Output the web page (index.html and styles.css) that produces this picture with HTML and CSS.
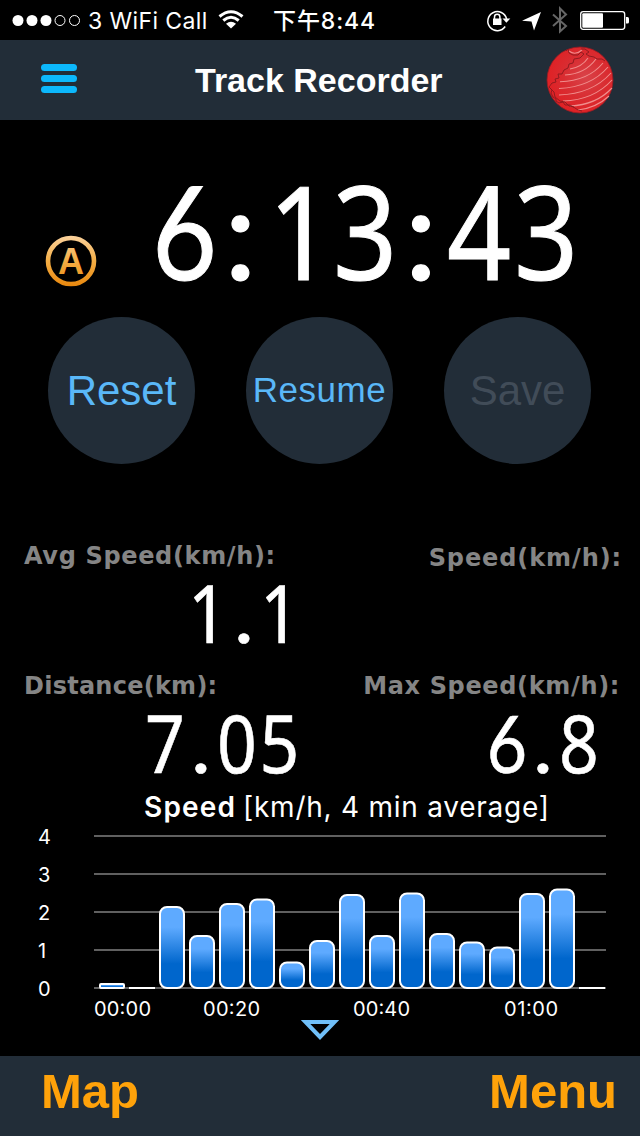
FILE: index.html
```html
<!DOCTYPE html>
<html lang="en">
<head>
	<meta charset="UTF-8">
	<title>Track Recorder</title>
	<link rel="stylesheet" href="styles.css">
</head>
<body>
	<div class="status">
		<svg class="signal" width="68" height="14" viewBox="0 0 68 14">
			<circle cx="6" cy="7.500" r="5.500" fill="#fff"/>
			<circle cx="20" cy="7.500" r="5.500" fill="#fff"/>
			<circle cx="34" cy="7.500" r="5.500" fill="#fff"/>
			<circle cx="48" cy="7.500" r="5" fill="none" stroke="#fff"/>
			<circle cx="62.500" cy="7.500" r="5" fill="none" stroke="#fff"/>
		</svg>
		<span class="carrier">3 WiFi Call</span>
		<svg class="wifi" width="26" height="20" viewBox="0 0 26 20">
			<path d="M1.500 6.500Q13 -3 24.500 6.500" fill="none" stroke="#fff" stroke-width="3"/>
			<path d="M5.300 10.500Q13 4 20.700 10.500" fill="none" stroke="#fff" stroke-width="3"/>
			<path d="M13 18.500L8 13.700Q13 9.800 18 13.700Z" fill="#fff"/>
		</svg>
		<span class="clock">下午8:44</span>
		<svg class="icons" width="146" height="28" viewBox="484 6 146 28">
			<path d="M505.200 26.500A9.500 9.500 0 1 1 506.600 19" fill="none" stroke="#fff" stroke-width="1.500"/>
			<path d="M502.500 18.500H510.300L506.400 22.800Z" fill="#fff"/>
			<rect x="493" y="18.500" width="8.500" height="6.500" fill="#fff"/>
			<path d="M494.500 19V17a2.700 2.700 0 0 1 5.400 0V19" fill="none" stroke="#fff" stroke-width="1.500"/>
			<path d="M541 12L534 30.500L531.500 21.600L522 20.800Z" fill="#fff"/>
			<path d="M553 14.500L566 26L560 31.500V8.500L566 14.500L553 26" fill="none" stroke="#666" stroke-width="2"/>
			<rect x="580.700" y="11.700" width="44" height="17.600" rx="2.500" fill="none" stroke="#fff" stroke-width="1.300"/>
			<rect x="582.300" y="13.300" width="20.700" height="14.400" rx="1" fill="#fff"/>
			<path d="M626 17h1.500q1.500 0 1.500 1.500v3.500q0 1.500 -1.500 1.500h-1.500Z" fill="#fff"/>
		</svg>
	</div>

	<div class="header">
		<div class="bars"><i></i><i></i><i></i></div>
		<h1>Track Recorder</h1>
		<svg class="globe" width="68" height="68" viewBox="0 0 68 68">
			<defs>
				<radialGradient id="red" cx="58%" cy="45%" r="55%">
					<stop offset="0" stop-color="#d94349"/>
					<stop offset="0.600" stop-color="#d92c31"/>
					<stop offset="1" stop-color="#df2226"/>
				</radialGradient>
			</defs>
			<circle cx="34" cy="34" r="33" fill="url(#red)" stroke="#9c1b22" stroke-width="0.800"/>
			<g fill="none" stroke="#f08d8c" stroke-width="1.100">
				<path d="M23 5q6 5 13 -1"/>
				<path d="M24 23Q36 21 42 12"/>
				<path d="M19 29Q39 28 50 13"/>
				<path d="M14 35.700Q42 35 57 17"/>
				<path d="M13 42.500Q45 41 62 21"/>
				<path d="M13 49Q46 48 65 27"/>
				<path d="M17 55Q48 54 66 34"/>
				<path d="M24 60Q50 59 66 42"/>
				<path d="M32 64Q50 62 63 50"/>
			</g>
			<g fill="none" stroke="#8a1a1e" stroke-width="0.900" stroke-linejoin="round">
				<path d="M28 13l-1 4 -4 1 -1 4 -4 2 -2 4 -4 0 1 4 -4 1 1 3 -4 1 -3 4 3 3 -1 3 2 4 3 2 0 2 3 2 4 -1 2 3 5 0 5 3 3 2 4 1"/>
				<path d="M20 5l2 -2 1 4 4 2 5 0 3 -3 3 2 -4 4 -6 1"/>
				<path d="M35 3l4 0 4 3 -3 2 3 2 5 1 3 2 5 0 3 2"/>
				<path d="M4 42l4 4 1 5 5 4 5 1 4 4 5 1"/>
			</g>
		</svg>
	</div>

	<div class="timer_row">
		<svg class="auto" width="52" height="52" viewBox="0 0 52 52">
			<defs>
				<linearGradient id="gold" gradientUnits="userSpaceOnUse" x1="0" y1="0" x2="0" y2="52">
					<stop offset="0" stop-color="#fbd3a0"/>
					<stop offset="0.500" stop-color="#f4ae45"/>
					<stop offset="1" stop-color="#e8870c"/>
				</linearGradient>
			</defs>
			<circle cx="26" cy="26" r="23" fill="none" stroke="url(#gold)" stroke-width="4.600"/>
			<text x="26" y="38.500" class="auto_text" fill="url(#gold)">A</text>
		</svg>
		<div class="digits timer">
			<b class="w61 six">6</b><b class="w51 dot">:</b><b class="w69">1</b><b class="w60">3</b><b class="w52 dot">:</b><b class="w64">4</b><b class="w70">3</b>
		</div>
	</div>

	<div class="buttons">
		<div class="btn">Reset</div>
		<div class="btn resume">Resume</div>
		<div class="btn disabled">Save</div>
	</div>

	<div class="stats">
		<div class="stat">
			<div class="label avg">Avg Speed(km/h):</div>
			<div class="digits value v11"><b>1</b><b class="dot">.</b><b>1</b></div>
		</div>
		<div class="stat right">
			<div class="label speed">Speed(km/h):</div>
		</div>
		<div class="stat">
			<div class="label distance">Distance(km):</div>
			<div class="digits value v705"><b>7</b><b class="dot">.</b><b>0</b><b>5</b></div>
		</div>
		<div class="stat right">
			<div class="label max">Max Speed(km/h):</div>
			<div class="digits value v68"><b class="six">6</b><b class="dot">.</b><b>8</b></div>
		</div>
	</div>

	<svg class="chart" width="640" height="268" viewBox="0 788 640 268">
		<defs>
			<linearGradient id="blue" x1="0" y1="0" x2="0" y2="1">
				<stop offset="0.250" stop-color="#5eaaff"/>
				<stop offset="0.700" stop-color="#0066cc"/>
			</linearGradient>
		</defs>
		<text x="144" y="817" class="title strong" textLength="91">Speed</text>
		<text x="243" y="817" class="title" textLength="306">[km/h, 4 min average]</text>
		<path d="M94 836H606M94 874H606M94 912H606M94 950H606M94 988H606" stroke="#606060" stroke-width="2"/>
		<g class="axis">
			<text x="38" y="844">4</text>
			<text x="38" y="882">3</text>
			<text x="38" y="920">2</text>
			<text x="38" y="958">1</text>
			<text x="38" y="996">0</text>
			<text x="94" y="1016" textLength="57">00:00</text>
			<text x="203" y="1016" textLength="57">00:20</text>
			<text x="353" y="1016" textLength="57">00:40</text>
			<text x="504" y="1016" textLength="54">01:00</text>
		</g>
		<g class="columns">
			<rect x="100" y="984" width="24" height="4" rx="1"/>
			<rect x="160" y="907" width="24" height="81" rx="7"/>
			<rect x="190" y="936" width="24" height="52" rx="7"/>
			<rect x="220" y="904" width="24" height="84" rx="7"/>
			<rect x="250" y="899.500" width="24" height="88.500" rx="7"/>
			<rect x="280" y="962.500" width="24" height="25.500" rx="7"/>
			<rect x="310" y="941" width="24" height="47" rx="7"/>
			<rect x="340" y="895" width="24" height="93" rx="7"/>
			<rect x="370" y="936" width="24" height="52" rx="7"/>
			<rect x="400" y="893.500" width="24" height="94.500" rx="7"/>
			<rect x="430" y="934" width="24" height="54" rx="7"/>
			<rect x="460" y="942.500" width="24" height="45.500" rx="7"/>
			<rect x="490" y="947.500" width="24" height="40.500" rx="7"/>
			<rect x="520" y="894" width="24" height="94" rx="7"/>
			<rect x="550" y="889.500" width="24" height="98.500" rx="7"/>
		</g>
		<path d="M129 988H155M579 988H605" stroke="#fff" stroke-width="2"/>
		<path d="M305.500 1022H334.500L320 1037Z" fill="none" stroke="#70bff8" stroke-width="4"/>
	</svg>

	<div class="footer">
		<span>Map</span>
		<span>Menu</span>
	</div>
</body>
</html>
```

FILE: styles.css
```css
*{
	margin:0;
	padding:0;
	box-sizing:border-box;
}

body{
	width:640px;
	height:1136px;
	background-color:#000;
	color:#fff;
	font-family:"Liberation Sans",Arial,sans-serif;
	overflow:hidden;
}

svg{
	display:block;
	flex:none;
}

.status{
	display:flex;
	align-items:center;
	height:40px;
	padding-left:12px;
	font-family:Inter,"Noto Sans CJK SC",sans-serif;
	font-size:23px;
	line-height:40px;
	white-space:nowrap;
}

.carrier{
	width:130px;
	padding:1px 0 0 8px;
	letter-spacing:0.4px;
}

.wifi{
	margin-left:8px;
}

.clock{
	width:240px;
	padding:1px 0 0 29px;
	font-weight:500;
	letter-spacing:0.9px;
}

.header{
	display:flex;
	align-items:center;
	height:80px;
	padding-left:41px;
	background-color:#222d38;
}

.bars{
	display:flex;
	flex-direction:column;
	gap:4px;
	width:36px;
	margin-top:-3px;
}

.bars i{
	height:7px;
	border-radius:4px;
	background-color:#0cb8fc;
}

.header h1{
	width:469px;
	padding-left:118px;
	font-size:34px;
	line-height:80px;
	white-space:nowrap;
}

.timer_row{
	display:flex;
	height:197px;
	padding-left:45px;
}

.auto{
	margin-top:115px;
}

.auto_text{
	font-family:"Liberation Sans",Arial,sans-serif;
	font-size:36px;
	font-weight:bold;
	text-anchor:middle;
}

.digits{
	display:flex;
	font-family:"Noto Sans",sans-serif;
	white-space:nowrap;
}

.digits b{
	display:flex;
	flex:none;
	justify-content:center;
	font-weight:normal;
	transform:scaleX(0.87);
}

.digits .six,
.digits .dot{
	font-family:Lato,sans-serif;
}

.digits .dot{
	transform:scaleX(1.05);
}

.timer{
	margin:48px 0 0 57px;
	height:125px;
	font-size:129px;
	line-height:125px;
	-webkit-text-stroke:1px #fff;
}

.w51{ width:51px; }
.w52{ width:52px; }
.w60{ width:60px; }
.w61{ width:61px; }
.w64{ width:64px; }
.w69{ width:69px; }
.w70{ width:70px; }

.buttons{
	display:flex;
	gap:51px;
	height:223px;
	padding-left:48px;
}

.btn{
	width:147px;
	height:147px;
	border-radius:50%;
	background-color:#222d38;
	color:#5ab8f8;
	font-size:42px;
	line-height:147px;
	text-align:center;
}

.resume{
	font-size:35px;
	line-height:145px;
	letter-spacing:0.5px;
}

.disabled{
	color:#414c58;
}

.stats{
	display:grid;
	grid-template-columns:320px 320px;
	grid-template-rows:130px 118px;
	height:248px;
}

.label{
	height:32px;
	padding-left:24px;
	color:#858585;
	font-family:"DejaVu Sans",sans-serif;
	font-size:24px;
	font-weight:bold;
	line-height:32px;
	white-space:nowrap;
}

.right .label{
	padding:0 20px 0 0;
	text-align:right;
}

.avg,.max{
	letter-spacing:0.65px;
}

.distance{
	letter-spacing:0.25px;
}

.right .speed{
	margin-top:2px;
	padding-right:18px;
	letter-spacing:0.9px;
}

.value{
	height:80px;
	font-size:80px;
	line-height:80px;
	-webkit-text-stroke:0.6px #fff;
}

.v11{ padding-left:190px; }
.v11 b{ width:36px; }
.v705{ padding-left:147px; }
.v705 b{ width:36px; }
.v705 b:last-child{ width:49px; }
.v68{ padding-left:169px; }
.v68 b{ width:36px; }

.chart text{
	fill:#fff;
	font-family:Inter,sans-serif;
}

.chart .title{
	font-size:28px;
}

.chart .strong{
	font-weight:600;
}

.chart .axis text{
	font-size:20px;
}

.columns rect{
	fill:url(#blue);
	stroke:#fff;
	stroke-width:2;
}

.footer{
	display:flex;
	justify-content:space-between;
	height:80px;
	padding:0 23px 0 41px;
	background-color:#222d38;
	color:#ffa20a;
	font-size:49px;
	font-weight:bold;
	line-height:70px;
}
```
